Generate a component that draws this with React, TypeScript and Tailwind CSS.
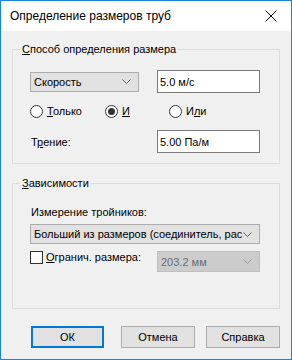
import React from 'react';

const Chevron: React.FC<{ color?: string }> = ({ color = '#606060' }) => (
  <svg width="9" height="5" viewBox="0 0 9 5" className="shrink-0">
    <polyline points="0.5,0.5 4.5,4.5 8.5,0.5" fill="none" stroke={color} strokeWidth="1" />
  </svg>
);

const Radio: React.FC<{ checked?: boolean; children: React.ReactNode; className?: string }> = ({
  checked = false,
  children,
  className = '',
}) => (
  <div className={`flex items-center ${className}`}>
    <span className="w-[13px] h-[13px] rounded-full border border-[#333] bg-white flex items-center justify-center shrink-0">
      {checked && <span className="w-[7px] h-[7px] rounded-full bg-[#333]" />}
    </span>
    <span className="ml-[4px]">{children}</span>
  </div>
);

const Combo: React.FC<{ text: string; className?: string }> = ({ text, className = '' }) => (
  <div
    className={`flex items-center h-[20px] border border-[#adadad] bg-[#e1e1e1] pl-[3px] pr-[7px] ${className}`}
  >
    <span className="flex-1 overflow-hidden whitespace-nowrap">{text}</span>
    <Chevron />
  </div>
);

const Edit: React.FC<{ value: string; className?: string }> = ({ value, className = '' }) => (
  <div className={`h-[23px] w-[103px] border border-[#7a7a7a] bg-white flex items-center pl-[2px] ${className}`}>
    {value}
  </div>
);

const Button: React.FC<{ children: React.ReactNode; primary?: boolean; className?: string }> = ({
  children,
  primary = false,
  className = '',
}) => (
  <div
    className={`h-[22px] bg-[#e1e1e1] flex items-center justify-center ${
      primary ? 'border-2 border-[#0078d7]' : 'border border-[#adadad]'
    } ${className}`}
  >
    {children}
  </div>
);

export default function App() {
  return (
    <div
      className="w-[292px] h-[360px] border border-[#1883d7] bg-[#f0f0f0] flex flex-col text-[11px] leading-[14px] text-black"
      style={{ fontFamily: '"Liberation Sans", Arial, sans-serif' }}
    >
      {/* title bar */}
      <div className="h-[30px] bg-white flex items-center pl-[9px] pr-[14px] shrink-0 text-[12px]">
        <span className="flex-1">Определение размеров труб</span>
        <svg width="12" height="12" viewBox="0 0 12 12">
          <path d="M0.5 0.5 L11.5 11.5 M11.5 0.5 L0.5 11.5" stroke="#000" strokeWidth="1" />
        </svg>
      </div>

      <div className="px-[11px] pt-[11px]">
        <fieldset className="border border-[#dcdcdc] h-[122px]">
          <legend className="ml-[7px] px-[2px] leading-[15px]">
            <u>С</u>пособ определения размера
          </legend>
          <div className="pl-[17px]">
            <div className="flex items-center h-[23px] mt-[13px]">
              <Combo text="Скорость" className="w-[109px]" />
              <Edit value="5.0 м/с" className="ml-[18px]" />
            </div>
            <div className="flex items-center h-[14px] mt-[11px]">
              <Radio className="w-[75px]">
                <u>Т</u>олько
              </Radio>
              <Radio checked className="w-[64px]">
                <u>И</u>
              </Radio>
              <Radio>
                И<u>л</u>и
              </Radio>
            </div>
            <div className="flex items-center h-[23px] mt-[12px]">
              <span className="w-[127px] pl-[1px]">
                Т<u>р</u>ение:
              </span>
              <Edit value="5.00 Па/м" />
            </div>
          </div>
        </fieldset>

        <fieldset className="border border-[#dcdcdc] h-[133px] mt-[12px]">
          <legend className="ml-[7px] px-[2px] leading-[15px]">
            <u>З</u>ависимости
          </legend>
          <div className="pl-[17px]">
            <div className="pl-[1px] mt-[14px]">Измерение тройников:</div>
            <Combo text="Больший из размеров (соединитель, рас" className="w-[230px] mt-[5px]" />
            <div className="flex items-start mt-[6px]">
              <div className="flex items-center w-[127px]">
                <span className="w-[13px] h-[13px] border border-[#333] bg-white shrink-0" />
                <span className="ml-[3px]">
                  <u>О</u>гранич. размера:
                </span>
              </div>
              <div className="flex items-center w-[103px] h-[21px] border border-[#bfbfbf] bg-[#cccccc] pl-[3px] pr-[7px] text-[#6d6d6d] mt-[1px]">
                <span className="flex-1">203.2 мм</span>
                <Chevron color="#a0a0a0" />
              </div>
            </div>
          </div>
        </fieldset>
      </div>

      <div className="flex pl-[30px] mt-[17px]">
        <Button primary className="w-[73px]">
          ОК
        </Button>
        <Button className="w-[74px] ml-[17px]">Отмена</Button>
        <Button className="w-[74px] ml-[11px]">Справка</Button>
      </div>
    </div>
  );
}
